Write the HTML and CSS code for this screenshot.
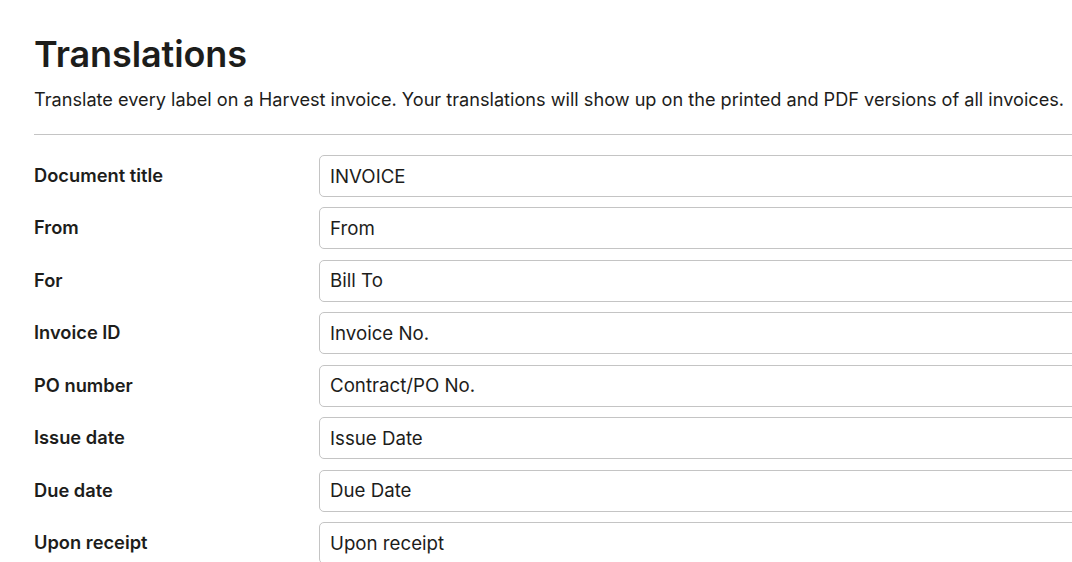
FILE: index.html
```html
<!DOCTYPE html>
<html lang="en">
<head>
<meta charset="utf-8">
<title>Translations</title>
<link rel="stylesheet" href="styles.css">
</head>
<body>
<main class="page">
  <header class="intro">
    <h1 class="title">Translations</h1>
    <p class="lead">Translate every label on a Harvest invoice. Your translations will show up on the printed and PDF versions of all invoices.</p>
  </header>
  <form class="fields">
    <label class="row"><span class="label">Document title</span><input class="field" type="text" value="INVOICE"></label>
    <label class="row"><span class="label">From</span><input class="field" type="text" value="From"></label>
    <label class="row"><span class="label">For</span><input class="field" type="text" value="Bill To"></label>
    <label class="row"><span class="label">Invoice ID</span><input class="field" type="text" value="Invoice No."></label>
    <label class="row"><span class="label">PO number</span><input class="field" type="text" value="Contract/PO No."></label>
    <label class="row"><span class="label">Issue date</span><input class="field" type="text" value="Issue Date"></label>
    <label class="row"><span class="label">Due date</span><input class="field" type="text" value="Due Date"></label>
    <label class="row"><span class="label">Upon receipt</span><input class="field" type="text" value="Upon receipt"></label>
  </form>
</main>
</body>
</html>
```
FILE: styles.css
```css
html, body {
  margin: 0;
  padding: 0;
  background: #ffffff;
  overflow: hidden;
}
body {
  font-family: Inter, "Noto Sans", Arial, sans-serif;
  color: #1d1d1b;
}
.page {
  width: 1100px;
  padding: 34px 0 0 34px;
}
.intro {
  border-bottom: 1px solid #c4c4c4;
  padding-bottom: 22px;
}
.title {
  margin: 0;
  font-size: 36px;
  font-weight: 600;
  line-height: 40px;
  letter-spacing: -0.1px;
}
.lead {
  margin: 12px 0 0;
  font-size: 18.15px;
  line-height: 26px;
}
.fields {
  display: flex;
  flex-direction: column;
  gap: 10.45px;
  padding-top: 20px;
}
.row {
  display: grid;
  grid-template-columns: 285px 1fr;
  align-items: center;
}
.label {
  font-size: 18.3px;
  font-weight: 600;
  line-height: 24px;
  margin-top: -2px;
}
.field {
  box-sizing: border-box;
  height: 42px;
  width: 100%;
  border: 1px solid #c4c4c4;
  border-radius: 5px;
  padding: 0 10px;
  font-family: inherit;
  font-size: 18.7px;
  color: #1d1d1b;
  background: #fff;
  outline: none;
}
```
